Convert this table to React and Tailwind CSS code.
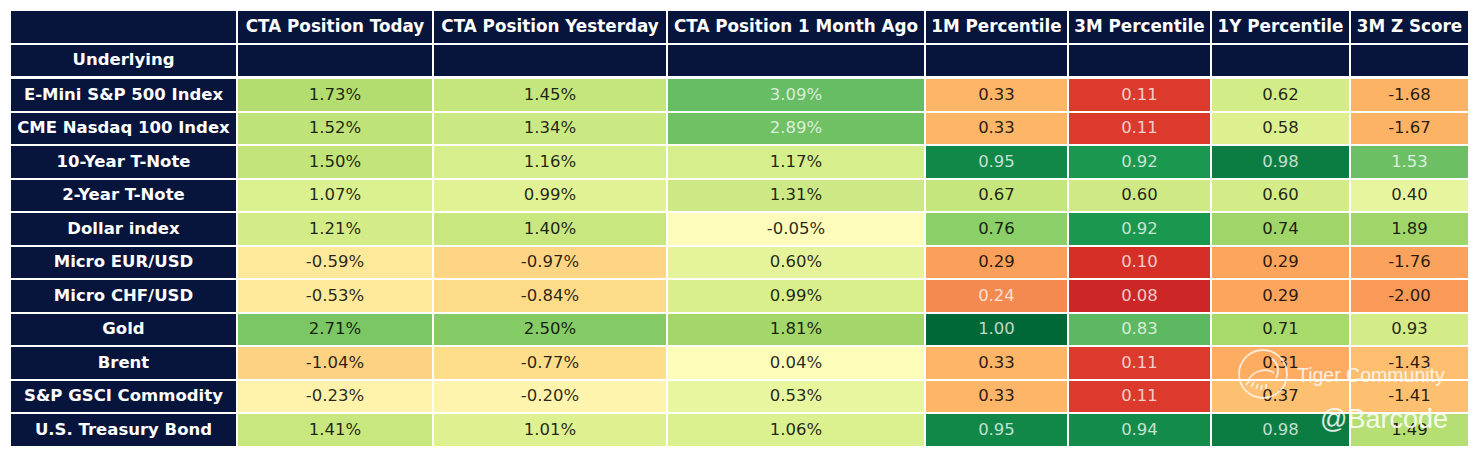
import React from "react";

const HEADERS = [
  "CTA Position Today",
  "CTA Position Yesterday",
  "CTA Position 1 Month Ago",
  "1M Percentile",
  "3M Percentile",
  "1Y Percentile",
  "3M Z Score",
];

// each cell: [text, bg class, light text?]
const ROWS = [
  ["E-Mini S&P 500 Index", [
    ["1.73%", "bg-[#b3dd6e]"], ["1.45%", "bg-[#c4e67c]"], ["3.09%", "bg-[#66bd63]", 1],
    ["0.33", "bg-[#fdb567]"], ["0.11", "bg-[#dc3a2c]", 1], ["0.62", "bg-[#d2ec87]"], ["-1.68", "bg-[#fdb366]"],
  ]],
  ["CME Nasdaq 100 Index", [
    ["1.52%", "bg-[#bfe279]"], ["1.34%", "bg-[#cbe982]"], ["2.89%", "bg-[#70c164]", 1],
    ["0.33", "bg-[#fdb567]"], ["0.11", "bg-[#dc3a2c]", 1], ["0.58", "bg-[#dcf08f]"], ["-1.67", "bg-[#fdb366]"],
  ]],
  ["10-Year T-Note", [
    ["1.50%", "bg-[#c2e47b]"], ["1.16%", "bg-[#d6ee8c]"], ["1.17%", "bg-[#d6ee8c]"],
    ["0.95", "bg-[#118848]", 1], ["0.92", "bg-[#1a9850]", 1], ["0.98", "bg-[#0b7d42]", 1], ["1.53", "bg-[#6cbf64]", 1],
  ]],
  ["2-Year T-Note", [
    ["1.07%", "bg-[#dbf08f]"], ["0.99%", "bg-[#e0f293]"], ["1.31%", "bg-[#cde985]"],
    ["0.67", "bg-[#c5e67d]"], ["0.60", "bg-[#cfe985]"], ["0.60", "bg-[#d3ec88]"], ["0.40", "bg-[#e8f59f]"],
  ]],
  ["Dollar index", [
    ["1.21%", "bg-[#d3ec88]"], ["1.40%", "bg-[#c8e77f]"], ["-0.05%", "bg-[#fefcba]"],
    ["0.76", "bg-[#8acf68]"], ["0.92", "bg-[#1a9850]", 1], ["0.74", "bg-[#9fd569]"], ["1.89", "bg-[#a0d669]"],
  ]],
  ["Micro EUR/USD", [
    ["-0.59%", "bg-[#fee89a]"], ["-0.97%", "bg-[#fed584]"], ["0.60%", "bg-[#e5f49b]"],
    ["0.29", "bg-[#fba05b]"], ["0.10", "bg-[#d62f27]", 1], ["0.29", "bg-[#fca55d]"], ["-1.76", "bg-[#fba35c]"],
  ]],
  ["Micro CHF/USD", [
    ["-0.53%", "bg-[#fee99c]"], ["-0.84%", "bg-[#fedb88]"], ["0.99%", "bg-[#d9ef8b]"],
    ["0.24", "bg-[#f58a51]", 1], ["0.08", "bg-[#cc2627]", 1], ["0.29", "bg-[#fca55d]"], ["-2.00", "bg-[#fa9a58]"],
  ]],
  ["Gold", [
    ["2.71%", "bg-[#7cc765]"], ["2.50%", "bg-[#86cc66]"], ["1.81%", "bg-[#a3d76a]"],
    ["1.00", "bg-[#006837]", 1], ["0.83", "bg-[#5db961]", 1], ["0.71", "bg-[#a8da6b]"], ["0.93", "bg-[#d3ec88]"],
  ]],
  ["Brent", [
    ["-1.04%", "bg-[#fed283]"], ["-0.77%", "bg-[#fede8a]"], ["0.04%", "bg-[#fbfdb9]"],
    ["0.33", "bg-[#fdb567]"], ["0.11", "bg-[#dc3a2c]", 1], ["0.31", "bg-[#fdac61]"], ["-1.43", "bg-[#fdbe6f]"],
  ]],
  ["S&P GSCI Commodity", [
    ["-0.23%", "bg-[#fff3ac]"], ["-0.20%", "bg-[#fff4ad]"], ["0.53%", "bg-[#e9f6a0]"],
    ["0.33", "bg-[#fdb567]"], ["0.11", "bg-[#dc3a2c]", 1], ["0.37", "bg-[#fdbf70]"], ["-1.41", "bg-[#fdc070]"],
  ]],
  ["U.S. Treasury Bond", [
    ["1.41%", "bg-[#c8e77f]"], ["1.01%", "bg-[#ddf191]"], ["1.06%", "bg-[#dbf08f]"],
    ["0.95", "bg-[#118848]", 1], ["0.94", "bg-[#138c4a]", 1], ["0.98", "bg-[#0b7d42]", 1], ["1.49", "bg-[#b5df72]"],
  ]],
];

const navy = "bg-[#07143c] text-white font-bold";
const cols = "grid grid-cols-[225px_194px_232px_256px_141px_141px_137px_117px] gap-[2px] w-max";

const TigerLogo = () => (
  <svg width="54" height="54" viewBox="0 0 54 54" fill="none" stroke="white" strokeOpacity="0.75" strokeWidth="1.8">
    <circle cx="27" cy="27" r="24" />
    <path d="M12 34 C 16 24, 30 20, 38 26" />
    <path d="M10 38 L 14 33 M15 40 L 18 35 M20 42 L 22 37 M25 43 L 26 38 M30 42 L 30 37" />
    <path d="M36 12 C 42 16, 44 24, 40 31" />
  </svg>
);

export default function App() {
  return (
    <div className="relative w-[1475px] h-[458px] bg-white pt-[11px] pl-[11px] font-['DejaVu_Sans',sans-serif] text-[16.5px] overflow-hidden">
      <div className="flex flex-col gap-[3px]">
        {/* header */}
        <div className={`${cols} auto-rows-[31.6px] text-[16.8px]`}>
          <div className={navy} />
          {HEADERS.map((h) => (
            <div key={h} className={`${navy} flex items-center justify-center whitespace-nowrap`}>
              {h}
            </div>
          ))}
          <div className={`${navy} flex items-center justify-center text-[16.5px]`}>Underlying</div>
          {HEADERS.map((h) => (
            <div key={h + "-blank"} className={navy} />
          ))}
        </div>

        {/* body */}
        <div className={`${cols} auto-rows-[31.5px]`}>
          {ROWS.map(([label, cells]) => (
            <React.Fragment key={label}>
              <div className={`${navy} flex items-center justify-center whitespace-nowrap`}>{label}</div>
              {cells.map(([v, bg, light], i) => (
                <div
                  key={i}
                  className={`${bg} ${light ? "text-white/75" : "text-black/85"} flex items-center justify-center`}
                >
                  {v}
                </div>
              ))}
            </React.Fragment>
          ))}
        </div>
      </div>

      {/* watermark */}
      <div className="absolute left-[1236px] top-[347px] flex items-center gap-[7px]">
        <TigerLogo />
        <span className="text-[19.5px] text-white/80 font-['Liberation_Sans',sans-serif] mt-[4px]">Tiger Community</span>
      </div>
      <div className="absolute left-[1320px] top-[406px] text-[27px] leading-none text-white/85 font-['Liberation_Sans',sans-serif]">
        @Barcode
      </div>
    </div>
  );
}
